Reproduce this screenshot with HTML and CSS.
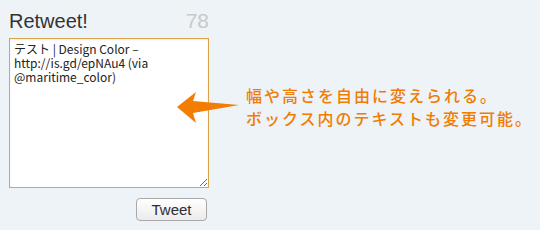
FILE: index.html
```html
<!DOCTYPE html>
<html lang="ja">
<head>
  <meta charset="UTF-8">
  <title>Retweet</title>
  <link rel="stylesheet" href="styles.css">
</head>
<body>
  <div class="stage">
    <div class="tweet-box">
      <div class="head">
        <span class="title">Retweet!</span>
        <span class="count">78</span>
      </div>
      <textarea class="msg">テスト | Design Color – http://is.gd/epNAu4 (via @maritime_color)</textarea>
      <div class="actions">
        <button class="btn">Tweet</button>
      </div>
    </div>

    <!-- 注釈 -->
    <svg class="arrow" width="70" height="34" viewBox="0 0 70 34">
      <path d="M2 15 L21 0 L18 9 L64 13 L18 21 L21 31 Z" fill="#f27d00"/>
    </svg>
    <p class="note">幅や高さを自由に変えられる。<br>ボックス内のテキストも変更可能。</p>
  </div>
</body>
</html>
```

FILE: styles.css
```css
*{
  margin:0;
  padding:0;
  box-sizing: border-box;
}
body{
  background-color: #eef3f8;
  font-family: "Liberation Sans", Arial, sans-serif;
}
.stage{
  position: relative;
  width: 540px;
  height: 230px;
  overflow: hidden;
}

.tweet-box{
  width: 200px;
  margin-left: 9px;
  padding-top: 8px;
}
.head{
  display: flex;
  justify-content: space-between;
  align-items: baseline;
  height: 25px;
  margin-bottom: 5px;
  line-height: 25px;
}
.title{
  font-size: 20px;
  color: #333;
}
.count{
  font-size: 21px;
  color: #c9c9c9;
}

.msg{
  display: block;
  width: 200px;
  height: 150px;
  padding: 3px 4px;
  border: 1px solid #d9a548;
  box-shadow: inset 0 1px 2px rgba(0,0,0,0.08);
  background: #fff;
  font-family: "Noto Sans CJK JP", "Liberation Sans", sans-serif;
  font-size: 12px;
  line-height: 14px;
  color: #222;
  outline: none;
}

.actions{
  display: flex;
  justify-content: flex-end;
  margin-top: 10px;
  padding-right: 2px;
}
.btn{
  width: 71px;
  height: 23px;
  border: 1px solid #a9a9a9;
  border-radius: 4px;
  background: linear-gradient(#ffffff, #ebebeb);
  font-family: "Liberation Sans", Arial, sans-serif;
  font-size: 15px;
  color: #2c2c3a;
}

.arrow{
  position: absolute;
  left: 175px;
  top: 92px;
}
.note{
  position: absolute;
  left: 246px;
  top: 84px;
  font-family: "Noto Sans CJK JP", sans-serif;
  font-size: 16px;
  font-weight: 500;
  line-height: 23px;
  letter-spacing: 2px;
  color: #f07c00;
  white-space: nowrap;
}
```
